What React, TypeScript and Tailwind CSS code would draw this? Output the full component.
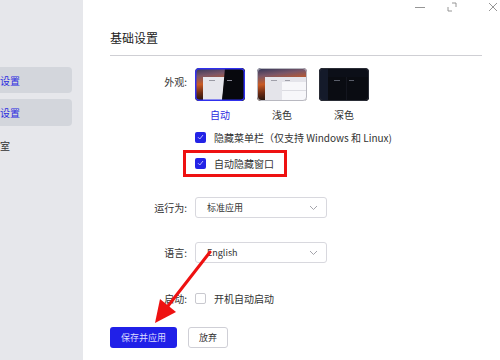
import React from "react";

const BLUE = "#2020e8";

const Check = ({ checked }: { checked: boolean }) => (
  <span
    className={
      checked
        ? "w-[11px] h-[11px] rounded-[2px] bg-[#2323e6] flex items-center justify-center"
        : "w-[11px] h-[11px] rounded-[2px] border border-[#c9c9cf] bg-white"
    }
  >
    {checked && (
      <svg width="7" height="6" viewBox="0 0 7 6">
        <path d="M1 3.2 L2.8 5 L6 1" stroke="#c8c8ff" strokeWidth="0.9" fill="none" />
      </svg>
    )}
  </span>
);

const Chevron = () => (
  <svg width="9" height="6" viewBox="0 0 9 6">
    <path d="M1 1 L4.5 4.5 L8 1" stroke="#9a9aa2" strokeWidth="0.9" fill="none" />
  </svg>
);

const Select = ({ value }: { value: string }) => (
  <div className="w-[132px] h-[21px] border border-[#d8d8de] rounded-[3px] flex items-center justify-between pl-[11px] pr-[8px] text-[9px] text-[#333]">
    <span>{value}</span>
    <Chevron />
  </div>
);

const Sunset = ({ id }: { id: string }) => (
  <linearGradient id={id} x1="0" y1="0" x2="0.2" y2="1">
    <stop offset="0" stopColor="#2e3458" />
    <stop offset="0.25" stopColor="#7a5668" />
    <stop offset="0.5" stopColor="#c85a24" />
    <stop offset="0.75" stopColor="#6a2a14" />
    <stop offset="1" stopColor="#1c120e" />
  </linearGradient>
);

const ThumbAuto = () => (
  <svg width="50" height="33" viewBox="0 0 50 33" className="block">
    <defs>
      <Sunset id="sa" />
      <clipPath id="ca">
        <rect x="0" y="0" width="50" height="33" rx="4" />
      </clipPath>
    </defs>
    <g clipPath="url(#ca)">
      <rect width="50" height="33" fill="url(#sa)" />
      <polygon points="8,9 30,9 27,33 8,33" fill="#e6e6ec" />
      <polygon points="30,0 50,0 50,33 27,33" fill="#07080d" />
      <rect x="14" y="12" width="6" height="1" fill="#9a9aa4" />
      <rect x="32" y="12" width="5" height="1" fill="#8a8a96" />
    </g>
    <rect x="0.75" y="0.75" width="48.5" height="31.5" rx="3.5" fill="none" stroke="#3030ee" strokeWidth="1.5" />
  </svg>
);

const ThumbLight = () => (
  <svg width="50" height="33" viewBox="0 0 50 33" className="block">
    <defs>
      <Sunset id="sl" />
      <clipPath id="cl">
        <rect x="0" y="0" width="50" height="33" rx="4" />
      </clipPath>
    </defs>
    <g clipPath="url(#cl)">
      <rect width="50" height="33" fill="url(#sl)" />
      <rect x="8" y="9" width="42" height="24" fill="#e4e4ea" />
      <rect x="25" y="14" width="25" height="19" fill="#f7f7fa" />
      <rect x="25" y="22" width="25" height="1" fill="#dcdce2" />
      <rect x="14" y="12" width="6" height="1" fill="#a0a0aa" />
      <rect x="28" y="12" width="5" height="1" fill="#a0a0aa" />
    </g>
    <rect x="0.5" y="0.5" width="49" height="32" rx="3.5" fill="none" stroke="#b8b8c0" strokeWidth="1" />
  </svg>
);

const ThumbDark = () => (
  <svg width="50" height="33" viewBox="0 0 50 33" className="block">
    <defs>
      <clipPath id="cd">
        <rect x="0" y="0" width="50" height="33" rx="4" />
      </clipPath>
    </defs>
    <g clipPath="url(#cd)">
      <rect width="50" height="33" fill="#0c0f18" />
      <rect x="0" y="0" width="9" height="33" fill="#141a2a" />
      <rect x="9" y="9" width="41" height="24" fill="#0a0c12" />
      <rect x="27" y="9" width="0.6" height="24" fill="#1c1f28" />
      <rect x="15" y="12" width="6" height="1" fill="#5a5e6a" />
      <rect x="30" y="12" width="5" height="1" fill="#5a5e6a" />
    </g>
    <rect x="0.5" y="0.5" width="49" height="32" rx="3.5" fill="none" stroke="#2a2d36" strokeWidth="1" />
  </svg>
);

export default function App() {
  return (
    <div
      className="relative w-[500px] h-[360px] overflow-hidden bg-white flex text-[#333]"
      style={{ fontFamily: '"Noto Sans CJK SC", "Noto Sans", sans-serif' }}
    >
      {/* sidebar */}
      <div className="w-[83px] h-full bg-[#e6e7eb] pt-[67px] flex flex-col">
        <div className="w-[72px] h-[26px] bg-[#d3d6dc] rounded-r-[4px] flex items-center text-[10px] text-[#2b2be0]">
          设置
        </div>
        <div className="mt-[6px] w-[72px] h-[27px] bg-[#d3d6dc] rounded-r-[4px] flex items-center text-[10px] text-[#2b2be0]">
          设置
        </div>
        <div className="mt-[7px] h-[24px] flex items-center text-[10px] text-[#333]">室</div>
      </div>

      {/* main */}
      <div className="flex-1 flex flex-col pl-[27px] pt-[30px]">
        <div className="text-[12px] leading-[16px] text-[#222]">基础设置</div>
        <div className="mt-[9px] w-[372px] h-px bg-[#cfcfd4]" />

        {/* appearance */}
        <div className="mt-[12px] flex">
          <div className="w-[77px] h-[26px] flex items-center justify-end text-[10px]">外观:</div>
          <div className="ml-[8px] flex gap-[12px]">
            <div className="flex flex-col items-center">
              <ThumbAuto />
              <span className="mt-[7px] text-[10px] leading-[14px] text-[#2b2be0]">自动</span>
            </div>
            <div className="flex flex-col items-center">
              <ThumbLight />
              <span className="mt-[7px] text-[10px] leading-[14px]">浅色</span>
            </div>
            <div className="flex flex-col items-center">
              <ThumbDark />
              <span className="mt-[7px] text-[10px] leading-[14px]">深色</span>
            </div>
          </div>
        </div>

        <div className="mt-[8px] ml-[85px] flex items-center gap-[8px] h-[14px] text-[10px]">
          <Check checked />
          <span>隐藏菜单栏（仅支持 Windows 和 Linux)</span>
        </div>
        <div className="mt-[12px] ml-[85px] flex items-center gap-[8px] h-[14px] text-[10px]">
          <Check checked />
          <span>自动隐藏窗口</span>
        </div>

        <div className="mt-[27px] flex items-center">
          <div className="w-[77px] flex justify-end text-[10px]">运行为:</div>
          <div className="ml-[8px]">
            <Select value="标准应用" />
          </div>
        </div>

        <div className="mt-[24px] flex items-center">
          <div className="w-[77px] flex justify-end text-[10px]">语言:</div>
          <div className="ml-[8px]">
            <Select value="English" />
          </div>
        </div>

        <div className="mt-[28px] flex items-center h-[14px]">
          <div className="w-[77px] flex justify-end text-[10px]">启动:</div>
          <div className="ml-[8px] flex items-center gap-[8px] text-[10px]">
            <Check checked={false} />
            <span>开机自动启动</span>
          </div>
        </div>

        <div className="mt-[22px] flex gap-[11px]">
          <button
            className="w-[67px] h-[21px] rounded-[3px] text-[9px] text-[#dcdcff]"
            style={{ backgroundColor: BLUE }}
          >
            保存并应用
          </button>
          <button className="w-[40px] h-[21px] rounded-[3px] border border-[#cfcfd6] bg-white text-[9px] text-[#333]">
            放弃
          </button>
        </div>
      </div>

      {/* window controls */}
      <div className="absolute top-[2px] left-[415px] flex items-center">
        <svg width="10" height="10" viewBox="0 0 10 10">
          <path d="M0 5.5 H10" stroke="#8a8a8a" strokeWidth="0.9" />
        </svg>
        <svg width="10" height="10" viewBox="0 0 10 10" className="ml-[22px]">
          <path d="M5 1 H9 V5 M1 5 V9 H5" stroke="#8a8a8a" strokeWidth="0.9" fill="none" />
        </svg>
        <svg width="10" height="10" viewBox="0 0 10 10" className="ml-[31px]">
          <path d="M1 1 L9 9 M9 1 L1 9" stroke="#8a8a8a" strokeWidth="0.9" />
        </svg>
      </div>

      {/* annotation: red box */}
      <div className="absolute left-[183px] top-[150px] w-[104px] h-[27px] border-[3px] border-[#ee1111]" />

      {/* annotation: red arrow */}
      <svg className="absolute left-0 top-0 pointer-events-none" width="500" height="360">
        <path d="M210 252 L168 306" stroke="#ee1111" strokeWidth="3" strokeLinecap="round" />
        <polygon points="155,323 160,299 176,312" fill="#ee1111" />
      </svg>
    </div>
  );
}
